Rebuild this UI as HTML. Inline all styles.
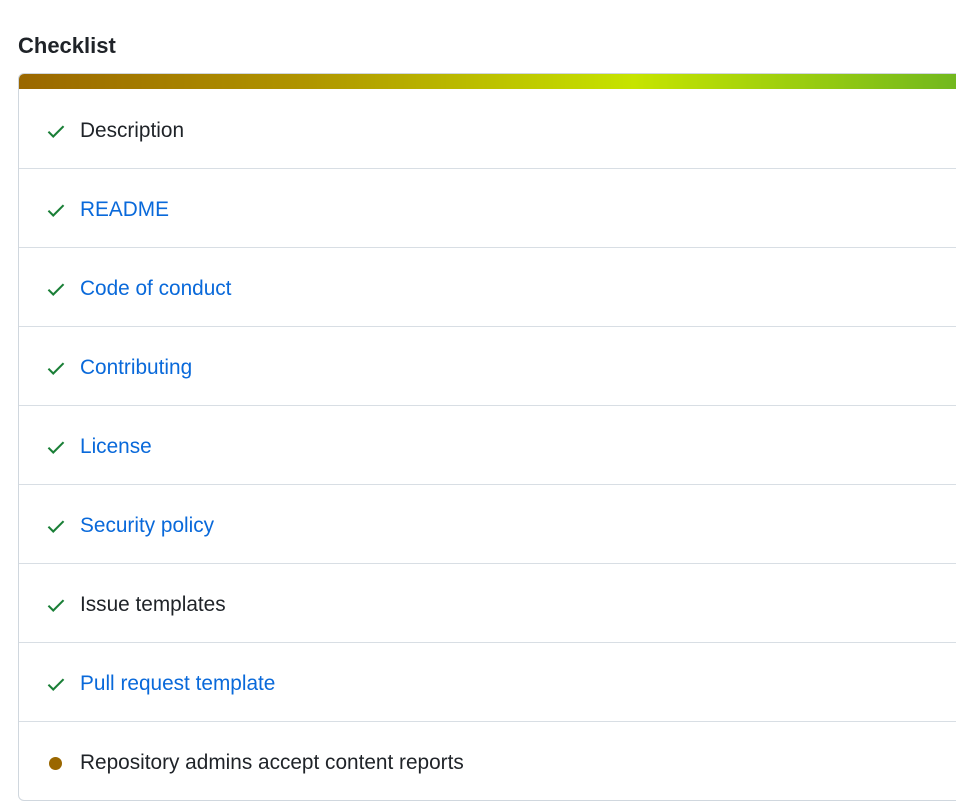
<!DOCTYPE html>
<html><head><style>
body{margin:0;background:#fff;font-family:"Segoe UI","Liberation Sans",sans-serif;}
h2{position:absolute;left:18px;top:31px;margin:0;font-size:22px;font-weight:600;color:#1f2328;line-height:30px;}
.box{position:absolute;left:18px;top:73px;width:960px;border:1px solid #d0d7de;border-radius:6px;overflow:hidden;}
.bar{height:15px;background:linear-gradient(90deg,#9a6700 0%,#b09500 30%,#c6e400 64%,#6cb520 100%);}
.row{height:78px;border-top:1px solid #d8dee4;display:flex;align-items:center;font-size:20.8px;color:#1f2328;padding-top:4px;box-sizing:border-box;}
.bar+.row{border-top:none;height:79px}
.row:not(.bar+.row){height:79px}
.ic{width:61px;display:flex;justify-content:flex-start;padding-left:26px;box-sizing:border-box;}
.a{color:#0969da;}
.dot{width:13px;height:13px;border-radius:50%;background:#9a6700;margin-left:4px;}
</style></head><body>
<h2>Checklist</h2>
<div class="box">
<div class="bar"></div>
<div class="row"><span class="ic"><svg width="22" height="22" viewBox="0 0 16 16"><path d="M2.5 8.5l3.5 3.5 7.5-7.5" fill="none" stroke="#1a7f37" stroke-width="1.5"/></svg></span>Description</div>
<div class="row"><span class="ic"><svg width="22" height="22" viewBox="0 0 16 16"><path d="M2.5 8.5l3.5 3.5 7.5-7.5" fill="none" stroke="#1a7f37" stroke-width="1.5"/></svg></span><span class="a">README</span></div>
<div class="row"><span class="ic"><svg width="22" height="22" viewBox="0 0 16 16"><path d="M2.5 8.5l3.5 3.5 7.5-7.5" fill="none" stroke="#1a7f37" stroke-width="1.5"/></svg></span><span class="a">Code of conduct</span></div>
<div class="row"><span class="ic"><svg width="22" height="22" viewBox="0 0 16 16"><path d="M2.5 8.5l3.5 3.5 7.5-7.5" fill="none" stroke="#1a7f37" stroke-width="1.5"/></svg></span><span class="a">Contributing</span></div>
<div class="row"><span class="ic"><svg width="22" height="22" viewBox="0 0 16 16"><path d="M2.5 8.5l3.5 3.5 7.5-7.5" fill="none" stroke="#1a7f37" stroke-width="1.5"/></svg></span><span class="a">License</span></div>
<div class="row"><span class="ic"><svg width="22" height="22" viewBox="0 0 16 16"><path d="M2.5 8.5l3.5 3.5 7.5-7.5" fill="none" stroke="#1a7f37" stroke-width="1.5"/></svg></span><span class="a">Security policy</span></div>
<div class="row"><span class="ic"><svg width="22" height="22" viewBox="0 0 16 16"><path d="M2.5 8.5l3.5 3.5 7.5-7.5" fill="none" stroke="#1a7f37" stroke-width="1.5"/></svg></span>Issue templates</div>
<div class="row"><span class="ic"><svg width="22" height="22" viewBox="0 0 16 16"><path d="M2.5 8.5l3.5 3.5 7.5-7.5" fill="none" stroke="#1a7f37" stroke-width="1.5"/></svg></span><span class="a">Pull request template</span></div>
<div class="row"><span class="ic"><span class="dot"></span></span>Repository admins accept content reports</div>
</div>
</body></html>
